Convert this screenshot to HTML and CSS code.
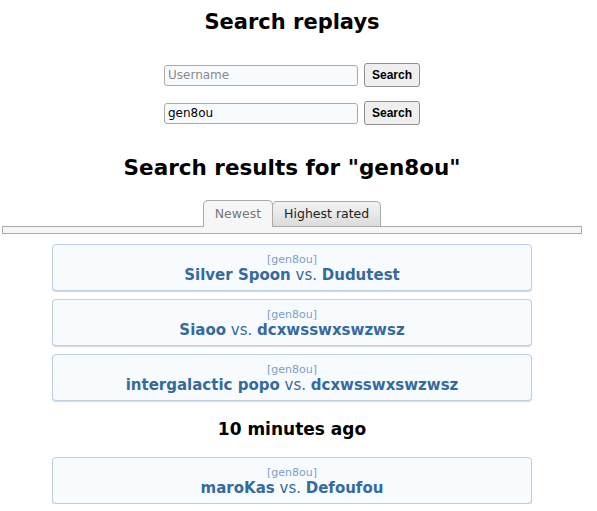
FILE: index.html
```html
<!DOCTYPE html>
<html lang="en">
<head>
<meta charset="utf-8">
<title>Search replays</title>
<link rel="stylesheet" href="styles.css">
</head>
<body>
<div class="page">
  <h1 class="title">Search replays</h1>
  <form class="search-form">
    <div class="search-row">
      <input class="search-input" type="text" placeholder="Username">
      <button class="search-btn" type="button">Search</button>
    </div>
    <div class="search-row">
      <input class="search-input" type="text" value="gen8ou">
      <button class="search-btn" type="button">Search</button>
    </div>
  </form>
  <h2 class="results-title">Search results for "gen8ou"</h2>
  <div class="tabs">
    <span class="tab tab-active">Newest</span>
    <span class="tab tab-inactive">Highest rated</span>
  </div>
  <div class="tab-bar"></div>
  <ul class="replay-list">
    <li class="replay-card">
      <div class="replay-format">[gen8ou]</div>
      <div class="replay-players"><strong>Silver Spoon</strong> vs. <strong>Dudutest</strong></div>
    </li>
    <li class="replay-card">
      <div class="replay-format">[gen8ou]</div>
      <div class="replay-players"><strong>Siaoo</strong> vs. <strong>dcxwsswxswzwsz</strong></div>
    </li>
    <li class="replay-card">
      <div class="replay-format">[gen8ou]</div>
      <div class="replay-players"><strong>intergalactic popo</strong> vs. <strong>dcxwsswxswzwsz</strong></div>
    </li>
  </ul>
  <h3 class="time-heading">10 minutes ago</h3>
  <ul class="replay-list">
    <li class="replay-card">
      <div class="replay-format">[gen8ou]</div>
      <div class="replay-players"><strong>maroKas</strong> vs. <strong>Defoufou</strong></div>
    </li>
  </ul>
</div>
</body>
</html>
```
FILE: styles.css
```css
html, body {
  margin: 0;
  padding: 0;
  background: #ffffff;
}

body {
  font-family: "DejaVu Sans", Verdana, sans-serif;
  color: #000;
}

.page {
  width: 580px;
  margin-left: 2px;
  padding-top: 10px;
}

.title {
  margin: 0;
  font-size: 21px;
  line-height: 24px;
  font-weight: bold;
  text-align: center;
}

.search-form {
  margin: 29px 0 0;
  display: flex;
  flex-direction: column;
  align-items: center;
  gap: 14px;
}

.search-row {
  display: flex;
  align-items: center;
  gap: 6px;
  height: 24px;
}

.search-input {
  box-sizing: border-box;
  width: 194px;
  height: 21px;
  margin: 0;
  padding: 0 3px;
  border: 1px solid #a9a9a9;
  border-radius: 3px;
  background: #f8fbfd;
  font-family: "DejaVu Sans", Verdana, sans-serif;
  font-size: 12px;
  color: #000;
}

.search-input::placeholder {
  color: #8a8a8a;
}

.search-btn {
  box-sizing: border-box;
  width: 56px;
  height: 24px;
  margin: 0;
  padding: 0;
  border: 1px solid #8f8f8f;
  border-radius: 3px;
  background: #efefef;
  font-family: "Liberation Sans", Arial, sans-serif;
  font-size: 12px;
  font-weight: bold;
  color: #000;
}

.results-title {
  margin: 31px 0 0;
  font-size: 21.5px;
  line-height: 24px;
  font-weight: bold;
  text-align: center;
}

.tabs {
  display: flex;
  justify-content: center;
  align-items: flex-end;
  margin-top: 20px;
  margin-bottom: -1px;
}

.tab {
  box-sizing: border-box;
  font-size: 12.5px;
  line-height: 15px;
  padding: 5px 11px 0;
  border: 1px solid #aaaaaa;
  border-bottom: none;
  border-radius: 5px 5px 0 0;
}

.tab-active {
  position: relative;
  z-index: 1;
  height: 27px;
  background: #f6f6f6;
  color: #777777;
}

.tab-inactive {
  height: 25px;
  padding-top: 4px;
  margin-left: -1px;
  margin-bottom: 1px;
  background: linear-gradient(#f3f3f3, #dcdcdc);
  color: #222222;
}

.tab-bar {
  box-sizing: border-box;
  height: 8px;
  border: 1px solid #aaaaaa;
  background: #f6f6f6;
}

.replay-list {
  list-style: none;
  margin: 10px 0 0;
  padding: 0;
  display: flex;
  flex-direction: column;
  align-items: center;
  gap: 8px;
}

.replay-card {
  box-sizing: border-box;
  width: 480px;
  height: 47px;
  padding: 8px 0 5px;
  border: 1px solid #bfd0e2;
  border-radius: 4px;
  background: #f8fbfd;
  box-shadow: 0 1px 1px rgba(150, 170, 195, 0.45);
  text-align: center;
  color: #356a9e;
}

.replay-format {
  font-size: 11px;
  line-height: 13px;
  color: #7b9ec8;
}

.replay-players {
  font-size: 15px;
  line-height: 19px;
}

.replay-players strong {
  font-weight: bold;
}

.time-heading {
  margin: 18px 0 0;
  font-size: 17px;
  line-height: 20px;
  font-weight: bold;
  text-align: center;
}

.time-heading + .replay-list {
  margin-top: 18px;
}
```
